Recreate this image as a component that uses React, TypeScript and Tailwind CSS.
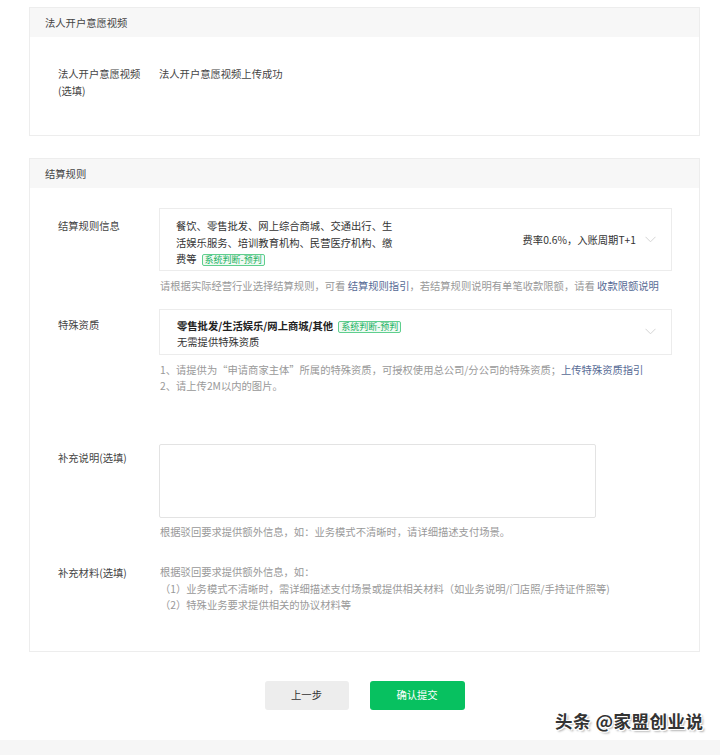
import React from "react";

const Chevron = () => (
  <svg width="11" height="7" viewBox="0 0 11 7" className="shrink-0">
    <path d="M0.5 0.8 L5.5 5.8 L10.5 0.8" fill="none" stroke="#d4d4d4" strokeWidth="1" />
  </svg>
);

const Tag = () => (
  <span className="inline-flex items-center h-[12px] px-[2px] ml-[5px] border border-[#5fcf8e] bg-[#effaf3] text-[#19b15f] text-[9px] leading-[10px] rounded-[2px] align-middle font-normal">
    系统判断-预判
  </span>
);

export default function App() {
  return (
    <div
      className="relative w-[720px] h-[755px] bg-white overflow-hidden text-[10.3px] text-[#333]"
      style={{ fontFamily: '"Noto Sans CJK SC", "Noto Sans", sans-serif' }}
    >
      <div className="pl-[29px] pr-[20px] pt-[7px]">
        {/* Card 1 */}
        <div className="border border-[#ededed]">
          <div className="h-[29px] bg-[#f7f7f7] flex items-center pl-[15px] text-[#444]">法人开户意愿视频</div>
          <div className="flex pl-[28px] pt-[28px] pb-[36px] leading-[17px]">
            <div className="w-[101px] text-[#444]">
              <div>法人开户意愿视频</div>
              <div>(选填)</div>
            </div>
            <div className="text-[#444]">法人开户意愿视频上传成功</div>
          </div>
        </div>

        {/* Card 2 */}
        <div className="mt-[22px] border border-[#ededed]">
          <div className="h-[29px] bg-[#f7f7f7] flex items-center pl-[15px] text-[#444]">结算规则</div>
          <div className="pl-[28px] pr-[27px] pt-[20px] pb-[37px] leading-[16.5px]">
            {/* Row 1 */}
            <div className="flex">
              <div className="w-[101px] pt-[10px] text-[#444]">结算规则信息</div>
              <div className="flex-1">
                <div className="h-[63px] border border-[#ececec] flex items-center pl-[16px] pr-[15px]">
                  <div className="w-[221px] text-[#333] self-start pt-[9px]">
                    餐饮、零售批发、网上综合商城、交通出行、生活娱乐服务、培训教育机构、民营医疗机构、缴费等<Tag />
                  </div>
                  <div className="flex-1" />
                  <div className="text-[#333] mr-[9px] mt-[2px]">费率0.6%，入账周期T+1</div>
                  <Chevron />
                </div>
                <div className="mt-[7px] pl-[1px] text-[#999] whitespace-nowrap">
                  请根据实际经营行业选择结算规则，可看 <span className="text-[#576b95]">结算规则指引</span>，若结算规则说明有单笔收款限额，请看 <span className="text-[#576b95]">收款限额说明</span>
                </div>
              </div>
            </div>

            {/* Row 2 */}
            <div className="flex mt-[14px]">
              <div className="w-[101px] pt-[8px] text-[#444]">特殊资质</div>
              <div className="flex-1">
                <div className="h-[46px] border border-[#ececec] flex items-center pl-[17px] pr-[15px]">
                  <div className="self-start pt-[8px]">
                    <div className="font-bold text-[#222]">
                      零售批发/生活娱乐/网上商城/其他<Tag />
                    </div>
                    <div className="text-[#333]">无需提供特殊资质</div>
                  </div>
                  <div className="flex-1" />
                  <Chevron />
                </div>
                <div className="mt-[7px] pl-[1px] text-[#999] whitespace-nowrap">
                  <div>1、请提供为“申请商家主体”所属的特殊资质，可授权使用总公司/分公司的特殊资质；<span className="text-[#576b95]">上传特殊资质指引</span></div>
                  <div>2、请上传2M以内的图片。</div>
                </div>
              </div>
            </div>

            {/* Row 3 */}
            <div className="flex mt-[49px]">
              <div className="w-[101px] pt-[6px] text-[#444]">补充说明(选填)</div>
              <div className="flex-1">
                <div className="w-[437px] h-[74px] border border-[#e3e3e3] rounded-[2px]" />
                <div className="mt-[6px] pl-[1px] text-[#999]">根据驳回要求提供额外信息，如：业务模式不清晰时，请详细描述支付场景。</div>
              </div>
            </div>

            {/* Row 4 */}
            <div className="flex mt-[24px]">
              <div className="w-[101px] pt-[1px] text-[#444]">补充材料(选填)</div>
              <div className="flex-1 pl-[1px] text-[#999]">
                <div>根据驳回要求提供额外信息，如：</div>
                <div>（1）业务模式不清晰时，需详细描述支付场景或提供相关材料（如业务说明/门店照/手持证件照等)</div>
                <div>（2）特殊业务要求提供相关的协议材料等</div>
              </div>
            </div>
          </div>
        </div>

        {/* Buttons */}
        <div className="mt-[29px] flex justify-center gap-[21px]">
          <button className="w-[84px] h-[29px] bg-[#ededed] rounded-[3px] text-[#333] text-[10.3px]">上一步</button>
          <button className="w-[95px] h-[29px] bg-[#07c160] rounded-[3px] text-white text-[10.3px]">确认提交</button>
        </div>
      </div>

      {/* bottom band */}
      <div className="absolute left-0 right-0 bottom-0 h-[15px] bg-[#f6f6f6]" />

      {/* watermark */}
      <div
        className="absolute left-[555px] top-[708px] text-[17.5px] font-bold text-[#333] whitespace-nowrap tracking-[0.5px]"
        style={{ textShadow: "1px 1px 0 #fff, -1px -1px 0 #fff, 1px -1px 0 #fff, -1px 1px 0 #fff, 2px 2px 2px rgba(0,0,0,0.3)" }}
      >
        头条 @家盟创业说
      </div>
    </div>
  );
}
